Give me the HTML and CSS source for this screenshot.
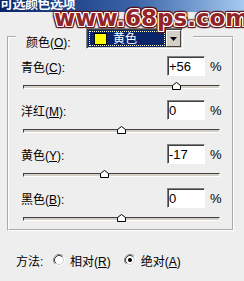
FILE: index.html
```html
<!DOCTYPE html>
<html>
<head>
<meta charset="utf-8">
<link rel="stylesheet" href="styles.css">
</head>
<body>
<div class="titlebar"><span class="title">可选颜色选项</span></div>
<div class="watermark">www.68ps.com</div>
<fieldset class="group">
  <legend class="legend">
    <span class="legend-inner">
      <span class="lbl">颜色(<u>O</u>):</span>
      <span class="combo">
        <span class="combo-field"><span class="focus"><span class="swatch"></span><span class="combo-text">黄色</span></span></span>
        <span class="combo-btn"><svg width="7" height="4" viewBox="0 0 7 4"><polygon points="0,0 7,0 3.5,4" fill="#000"/></svg></span>
      </span>
    </span>
  </legend>
  <div class="channels">
    <div class="channel">
      <div class="row"><span class="label">青色(<u>C</u>):</span><span class="num">+56</span><span class="pct">%</span></div>
      <div class="slider"><div class="track"></div><svg class="thumb" style="--v:56" width="9" height="8" viewBox="0 0 9 8"><polygon points="0.5,7.5 0.5,3.5 4.5,0.5 8.5,3.5 8.5,7.5" fill="#fff" stroke="#000"/></svg></div>
    </div>
    <div class="channel">
      <div class="row"><span class="label">洋红(<u>M</u>):</span><span class="num">0</span><span class="pct">%</span></div>
      <div class="slider"><div class="track"></div><svg class="thumb" style="--v:0" width="9" height="8" viewBox="0 0 9 8"><polygon points="0.5,7.5 0.5,3.5 4.5,0.5 8.5,3.5 8.5,7.5" fill="#fff" stroke="#000"/></svg></div>
    </div>
    <div class="channel">
      <div class="row"><span class="label">黄色(<u>Y</u>):</span><span class="num">-17</span><span class="pct">%</span></div>
      <div class="slider"><div class="track"></div><svg class="thumb" style="--v:-17" width="9" height="8" viewBox="0 0 9 8"><polygon points="0.5,7.5 0.5,3.5 4.5,0.5 8.5,3.5 8.5,7.5" fill="#fff" stroke="#000"/></svg></div>
    </div>
    <div class="channel">
      <div class="row"><span class="label">黑色(<u>B</u>):</span><span class="num">0</span><span class="pct">%</span></div>
      <div class="slider"><div class="track"></div><svg class="thumb" style="--v:0" width="9" height="8" viewBox="0 0 9 8"><polygon points="0.5,7.5 0.5,3.5 4.5,0.5 8.5,3.5 8.5,7.5" fill="#fff" stroke="#000"/></svg></div>
    </div>
  </div>
</fieldset>
<div class="method">
  <span class="m-label">方法:</span>
  <span class="opt opt-first">
    <svg class="radio" width="12" height="12" viewBox="0 0 12 12">
      <circle cx="6" cy="6" r="5.5" fill="none" stroke="#fff"/>
      <path d="M2.11 9.89 A5.5 5.5 0 0 1 9.89 2.11" fill="none" stroke="#808080"/>
      <circle cx="6" cy="6" r="4.5" fill="#fff" stroke="#d4d0c8"/>
      <path d="M2.82 9.18 A4.5 4.5 0 0 1 9.18 2.82" fill="none" stroke="#404040"/>
    </svg>
    <span>相对(<u>R</u>)</span>
  </span>
  <span class="opt">
    <svg class="radio" width="12" height="12" viewBox="0 0 12 12">
      <circle cx="6" cy="6" r="5.5" fill="none" stroke="#fff"/>
      <path d="M2.11 9.89 A5.5 5.5 0 0 1 9.89 2.11" fill="none" stroke="#808080"/>
      <circle cx="6" cy="6" r="4.5" fill="#fff" stroke="#d4d0c8"/>
      <path d="M2.82 9.18 A4.5 4.5 0 0 1 9.18 2.82" fill="none" stroke="#404040"/>
      <circle cx="6" cy="6" r="2" fill="#000"/>
    </svg>
    <span>绝对(<u>A</u>)</span>
  </span>
</div>
</body>
</html>
```

FILE: styles.css
```css
html, body {
  margin: 0;
  padding: 0;
}
body {
  width: 244px;
  height: 281px;
  overflow: hidden;
  position: relative;
  background: #eeeeee;
  font-family: "Liberation Sans", "Noto Sans CJK SC", sans-serif;
  font-size: 12px;
  color: #000;
}
u {
  text-decoration: underline;
}
.titlebar {
  height: 12px;
  overflow: hidden;
  background: linear-gradient(90deg, #0a246a 0%, #3a64a8 55%, #a6caf0 100%);
}
.title {
  display: block;
  margin-top: -3px;
  color: #fff;
  font-weight: bold;
  font-size: 13px;
  line-height: 13px;
  letter-spacing: -0.5px;
  white-space: nowrap;
}
.watermark {
  position: absolute;
  left: 54px;
  top: 6px;
  font-family: "DejaVu Sans", sans-serif;
  font-weight: bold;
  font-size: 23px;
  line-height: 25px;
  letter-spacing: 0;
  color: #932428;
  white-space: nowrap;
  text-shadow:
    1px 0 #fff, -1px 0 #fff, 0 1px #fff, 0 -1px #fff,
    1px 1px #fff, -1px -1px #fff, 1px -1px #fff, -1px 1px #fff,
    2px 0 1px #5a0c10, -2px 0 1px #5a0c10, 0 2px 1px #5a0c10, 0 -2px 1px #5a0c10,
    2px 2px 1px #5a0c10, -2px -2px 1px #5a0c10, 2px -2px 1px #5a0c10, -2px 2px 1px #5a0c10;
}
.group {
  display: block;
  margin: 12px 0 0 7px;
  width: 227px;
  box-sizing: border-box;
  border: 2px groove #fff;
  padding: 0 0 0 7px;
  min-width: 0;
}
.legend {
  padding: 4px 10px 0 10px;
  margin: 0;
}
.legend-inner {
  display: flex;
  align-items: center;
  height: 21px;
}
.lbl {
  width: 60px;
  margin-top: 5px;
  white-space: nowrap;
}
.combo {
  display: flex;
  width: 97px;
  height: 21px;
  box-sizing: border-box;
  border: 1px solid;
  border-color: #808080 #fff #fff #808080;
  box-shadow: inset 1px 1px #404040, inset -1px -1px #d4d0c8;
  padding: 1px;
}
.combo-field {
  flex: 1;
  display: flex;
  background: #0a246a;
  padding: 1px;
}
.focus {
  flex: 1;
  display: flex;
  align-items: center;
  gap: 6px;
  padding-left: 4px;
  border: 1px dotted #ffffc8;
}
.swatch {
  width: 13px;
  height: 12px;
  box-sizing: border-box;
  background: #ffff00;
  border: 1px solid #000;
}
.combo-text {
  color: #fff;
  font-size: 12px;
  line-height: 12px;
}
.combo-btn {
  width: 15px;
  box-sizing: border-box;
  display: flex;
  align-items: center;
  justify-content: center;
  background: #d4d0c8;
  border: 1px solid;
  border-color: #fff #404040 #404040 #fff;
}
.channels {
  padding-top: 7px;
}
.row {
  display: flex;
  align-items: center;
  height: 20px;
  padding-left: 5px;
}
.label {
  width: 146px;
  white-space: nowrap;
}
.num {
  width: 38px;
  height: 20px;
  box-sizing: border-box;
  border: 1px solid;
  border-color: #808080 #fff #fff #808080;
  box-shadow: inset 1px 1px #404040;
  background: #fff;
  padding: 2px 0 0 1px;
  font-size: 13px;
  line-height: 16px;
}
.pct {
  margin-left: 5px;
  font-size: 13px;
}
.slider {
  position: relative;
  height: 24px;
  box-sizing: border-box;
  padding-top: 9px;
  width: 197px;
  margin-left: 7px;
}
.channel:last-child .slider {
  height: 21px;
}
.track {
  height: 4px;
  box-sizing: border-box;
  border: 1px solid;
  border-color: #404040 #fff #fff #404040;
  background: #d4d0c8;
}
.thumb {
  position: absolute;
  top: 6px;
  left: calc(94px + var(--v) * 0.985px);
}
.method {
  display: flex;
  align-items: center;
  height: 14px;
  margin-top: 22px;
  padding-left: 16px;
}
.m-label {
  width: 37px;
}
.opt {
  display: flex;
  align-items: center;
  gap: 5px;
  white-space: nowrap;
}
.opt-first {
  margin-right: 13px;
}
.radio {
  display: block;
}
```
